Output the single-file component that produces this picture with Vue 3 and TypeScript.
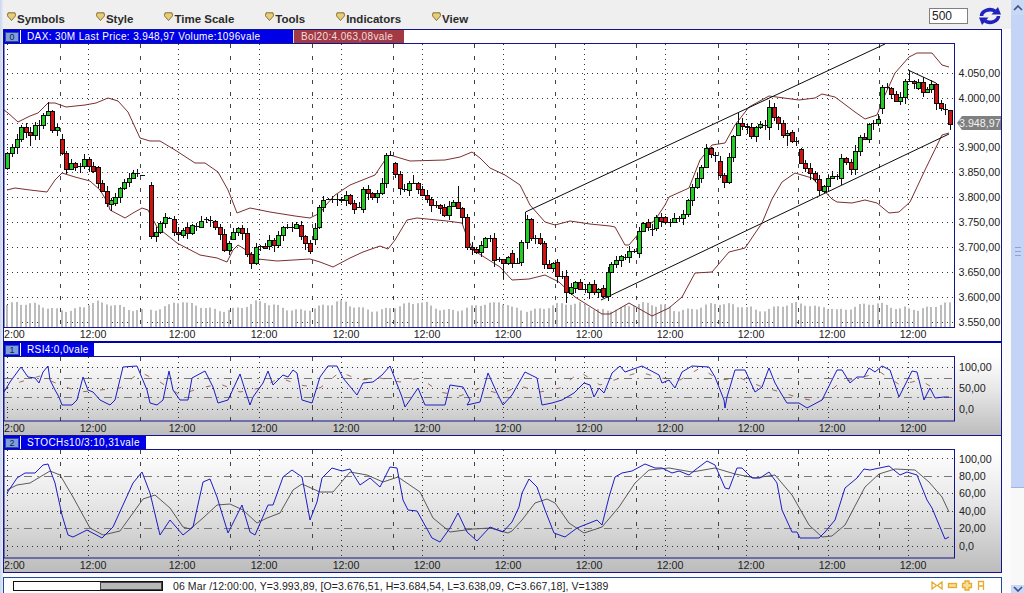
<script setup lang="ts">
type Candle = { x: number; top: number; bottom: number; kind: string; hi: number; lo: number; vol: number }

const menus = ['Symbols', 'Style', 'Time Scale', 'Tools', 'Indicators', 'View']

const raw = `7,153,168,g 12,147,153,g 17,139,147,g 21,127,139,g 26,127,132,r 30,132,135,r 35,125,135,g 39,125,125,d 43,115,125,g 48,111,115,g 52,111,130,r 57,127,130,g
62,139,153,r 66,153,169,r 71,163,169,g 75,163,167,r 80,166,166,d 84,159,166,g 89,159,166,r 93,166,171,r 98,167,183,r 102,183,191,r 107,191,203,r 111,200,204,g 115,197,203,g 120,188,197,g 124,182,188,g 129,178,182,g 133,173,178,g 137,173,173,d 142,175,175,d
151,185,236,r 156,232,236,g 160,223,232,g 165,217,223,g 169,218,218,d 174,219,232,r 178,232,234,r 183,230,235,g 187,227,233,r 192,225,233,g 196,226,226,d 201,221,227,g 206,219,219,d 210,220,220,d 215,221,227,r 220,227,234,r 224,234,250,r 229,243,250,g
233,232,239,g 238,228,232,g 242,228,233,r 247,233,254,r 251,254,263,r 256,247,263,g 260,246,246,d 265,246,248,r 269,240,246,g 274,240,245,r 278,235,245,g 283,227,235,g 287,227,227,d 292,227,227,d 296,224,228,g 301,225,236,r 305,236,243,r 310,243,251,r
315,228,239,g 319,207,227,g 323,200,207,g 328,199,199,d 332,199,199,d 337,199,199,d 341,199,200,g 346,195,200,g 350,195,203,r 354,203,209,r 359,207,207,d 363,189,209,g 368,189,193,r 372,193,197,r 377,193,197,g 382,183,193,g 386,155,183,g 390,155,155,d
395,163,174,r 400,174,188,r 404,189,189,d 409,183,190,g 413,183,183,d 418,183,189,r 422,189,195,r 427,195,199,r 431,199,205,r 436,205,205,d 440,205,208,r 444,207,215,r 449,206,215,g 453,202,206,g 458,202,208,r 462,208,217,r 467,217,247,r 472,247,249,r
476,249,252,r 481,245,252,g 485,238,247,g 490,238,238,d 494,238,260,r 499,259,259,d 503,259,263,r 508,257,263,g 512,253,263,r 517,263,263,d 521,242,262,g 527,219,242,g 531,219,238,r 535,238,238,d 540,238,243,r 544,243,264,r 549,264,268,r 553,263,268,g
557,262,276,r 562,276,276,d 566,276,292,r 571,287,293,g 575,282,288,g 580,282,289,r 585,289,289,d 589,284,292,g 594,284,292,r 598,289,292,g 603,288,296,r 608,272,296,g 611,264,272,g 616,260,264,g 621,256,260,g 625,257,257,d 629,251,257,g 634,251,251,d
639,231,253,g 643,223,231,g 648,222,227,r 652,229,229,d 656,217,228,g 661,217,221,r 665,217,222,r 670,222,222,d 674,218,222,g 679,218,218,d 683,214,218,g 688,200,214,g 692,187,200,g 697,178,187,g 701,167,178,g 706,148,167,g 711,148,154,r 715,155,155,d
720,161,175,r 724,175,182,r 729,157,182,g 733,136,157,g 738,123,135,g 742,123,126,r 747,126,127,r 751,127,136,r 756,127,136,g 760,124,127,g 765,125,125,d 769,107,127,g 774,107,117,r 778,117,123,r 783,123,135,r 787,133,135,g 792,132,141,r 796,141,141,d
801,149,163,r 805,163,168,r 810,168,173,r 815,173,179,r 819,179,190,r 824,186,191,g 828,178,186,g 832,176,178,g 837,176,176,d 841,158,178,g 846,158,162,r 851,162,169,r 855,151,169,g 860,137,151,g 864,137,139,r 869,124,139,g 873,123,123,d 878,119,123,g
882,87,108,g 887,87,87,d 891,88,94,r 896,94,101,r 900,97,101,g 905,81,97,g 909,81,81,d 914,81,83,r 918,82,88,g 923,82,92,r 927,89,92,g 931,84,89,g 936,84,103,r 941,103,108,r 945,109,109,d 950,110,124,r`

const wickFix: Record<number, [number, number]> = {
  769: [100, 140], 909: [70, 82], 738: [113, 136], 587: [285, 303], 566: [270, 303], 844: [150, 180], 855: [145, 175],
  48: [102, 116], 39: [120, 140], 30: [127, 146], 133: [170, 178], 142: [175, 175], 458: [186, 208], 413: [175, 184],
  850: [160, 178], 950: [110, 130], 324: [196, 208], 459: [186, 209], 787: [130, 146], 814: [171, 197], 503: [259, 279]
}

const candles: Candle[] = raw.trim().split(/\s+/).map((entry, i) => {
  const [x, top, bottom, kind] = entry.split(',')
  const nx = Number(x)
  const fix = wickFix[nx]
  const vol = 20 + 3.5 * Math.sin(i * 0.37) + 1.5 * Math.sin(i * 1.31) + (i % 18 < 3 ? 2 : 0)
  return {
    x: nx,
    top: Number(top),
    bottom: Number(bottom),
    kind,
    hi: fix ? fix[0] : Number(top) - ((i * 7) % 5) - 1,
    lo: fix ? fix[1] : Number(bottom) + ((i * 3) % 7) + 1,
    vol
  }
})

const bodyClass = (kind: string) => (kind === 'g' ? 'up' : 'down')

const upper = '4,110 8,113 18,122 30,116 38,113 48,103 55,103 66,107 85,105 96,103 108,98 118,101 128,112 140,138 150,141 160,141 175,150 195,163 205,163 218,172 228,190 232,200 237,213 250,208 270,212 295,216 310,218 320,213 326,205 335,195 350,185 375,175 385,160 390,155 400,158 410,161 445,160 460,157 472,152 480,158 490,168 505,175 520,185 530,205 545,222 555,225 570,221 590,224 610,226 615,227 625,245 629,245 640,232 655,220 665,205 669,197 689,188 700,160 712,145 725,143 735,125 749,107 769,96 799,100 815,98 822,94 835,97 855,112 865,119 877,115 884,97 895,73 909,57 917,53 932,53 942,65 949,67'
const lower = '7,190 15,188 30,190 47,192 55,180 62,173 75,177 90,181 100,190 108,203 110,210 125,218 133,213 142,208 148,210 157,227 177,243 200,255 217,258 227,262 233,250 238,245 246,250 258,259 277,261 310,259 320,262 333,267 350,258 363,252 380,246 388,249 395,240 407,220 417,218 447,221 462,223 467,237 473,250 500,267 512,280 529,279 545,275 559,282 575,297 602,314 610,314 629,303 652,316 669,308 682,297 695,273 712,272 729,252 745,248 762,223 772,199 782,182 795,173 812,178 832,199 837,202 852,203 865,200 877,203 889,213 899,212 910,202 925,170 942,135 949,133'
const rsi = '4,392 10,382 21,367 28,377 35,378 39,383 43,372 48,366 50,380 55,390 59,397 62,405 72,405 77,400 83,377 88,390 93,392 100,400 110,405 115,400 123,367 137,366 147,390 150,403 157,405 163,400 169,371 173,390 180,400 188,400 192,378 205,371 213,387 218,403 228,400 240,374 245,390 250,405 253,397 263,383 268,371 273,385 283,375 288,377 293,370 297,373 302,400 312,403 320,377 328,366 337,366 343,378 357,395 363,383 373,382 382,375 390,366 402,397 405,407 410,400 418,388 425,405 445,405 450,385 463,387 470,400 467,405 480,402 488,373 497,393 503,405 512,395 525,372 537,378 542,405 552,403 562,400 574,393 584,383 590,385 594,397 599,388 604,393 612,373 620,366 625,372 642,366 659,375 662,383 669,380 675,388 682,372 692,366 709,367 715,377 724,400 725,408 727,397 735,370 745,370 755,392 762,387 769,368 775,383 785,400 787,403 799,403 807,408 822,400 837,370 842,370 850,383 857,377 864,377 869,368 875,372 882,366 890,370 899,397 912,371 917,372 924,400 930,388 935,398 944,397 949,397'
const rsiSignal = '4,390 20,382 40,376 60,385 80,392 100,390 120,388 140,372 160,382 180,395 200,388 220,384 240,392 260,388 280,378 300,385 320,388 340,372 360,380 380,378 400,382 420,378 440,392 460,396 480,388 500,394 520,386 540,392 560,388 580,372 600,385 620,378 640,372 660,378 680,380 700,368 720,380 740,378 760,386 780,392 800,398 820,402 840,382 860,378 880,372 900,385 920,380 940,392'
const stoch = '7,493 17,478 25,473 35,473 43,465 48,464 55,483 62,515 68,535 73,537 87,530 102,538 113,527 133,483 142,472 150,493 160,535 170,520 183,535 193,527 203,482 210,479 217,497 228,533 242,505 250,532 255,535 268,505 273,505 283,477 292,470 302,477 310,520 317,502 322,478 332,468 342,471 350,469 360,485 370,478 380,487 390,467 397,468 403,500 408,510 417,511 432,538 440,542 450,528 458,513 467,532 477,541 490,527 503,532 512,522 519,507 522,493 529,479 537,487 545,510 554,533 565,537 577,528 597,520 602,525 609,497 615,477 622,473 632,471 645,464 655,468 662,468 672,473 679,471 689,475 695,470 707,461 715,465 725,488 729,489 737,468 742,468 752,478 760,478 769,472 777,483 782,510 792,532 797,532 800,538 819,538 825,532 835,520 845,488 857,478 864,469 870,470 889,466 900,475 907,472 917,475 927,500 932,508 945,539 949,537'
const stochSignal = '7,490 17,485 30,483 40,477 50,471 60,475 73,497 90,528 103,535 120,531 133,513 143,499 155,495 170,508 183,527 190,529 203,518 217,505 230,504 243,510 257,523 267,518 280,513 293,490 302,484 320,492 333,492 350,472 367,475 383,482 398,477 420,492 433,518 450,532 473,529 490,528 508,533 512,531 522,520 535,503 547,499 555,503 569,523 584,533 602,527 619,507 635,483 649,470 669,468 692,472 715,468 735,474 755,478 775,475 792,495 809,525 822,537 832,536 845,525 865,487 879,474 895,469 915,470 929,482 942,497 949,512'

const mainDotted = [73, 98, 123, 147, 172, 197, 222, 247, 272, 297, 322]
const dayDotted = [7, 88, 178, 259, 341, 422, 503, 584, 665, 746, 828, 908]
const dayDashed = [60, 140, 230, 312, 393, 474, 555, 636, 718, 798, 879]
const timeLabels = [93, 182, 264, 346, 427, 508, 589, 670, 751, 832, 913]

const priceLabels = [
  ['4.050,00', 73], ['4.000,00', 98], ['3.900,00', 147], ['3.850,00', 172], ['3.800,00', 197],
  ['3.750,00', 222], ['3.700,00', 247], ['3.650,00', 272], ['3.600,00', 297], ['3.550,00', 322]
] as const
const rsiLabels = [['100,00', 367], ['50,00', 388], ['0,0', 409]] as const
const stochLabels = [['100,00', 459], ['80,00', 476], ['60,00', 493], ['40,00', 511], ['20,00', 528], ['0,0', 546]] as const
</script>

<template>
  <div class="page">
    <div class="left-edge"></div>
    <div class="main">
      <header class="toolbar">
        <nav class="menus">
          <span v-for="m in menus" :key="m" class="menu">
            <svg width="9" height="9" viewBox="0 0 9 9" class="gem"><path d="M1 .8h7l.6 3L4.500 8.500.4 3.800z" fill="#e6cd7c" stroke="#7d6420" stroke-width=".9" /></svg>
            {{ m }}
          </span>
        </nav>
        <div class="tools">
          <div class="count">500</div>
          <svg width="24" height="20" viewBox="0 0 24 20" class="refresh">
            <path d="M3.500 10A8.500 6.500 0 0 1 17 5" fill="none" stroke="#2222c0" stroke-width="3.600" />
            <path d="M13.500 8.500H23L20 1z" fill="#2222c0" />
            <path d="M20.500 10A8.500 6.500 0 0 1 7 15" fill="none" stroke="#2222c0" stroke-width="3.600" />
            <path d="M10.500 11.500H1L4 19z" fill="#2222c0" />
          </svg>
        </div>
      </header>

      <section class="panels">
        <div class="tabs">
          <span class="tab blue"><i class="chip">0</i><b class="tab-text wide">DAX: 30M Last Price: 3.948,97 Volume:1096vale</b></span>
          <span class="tab red">Bol20:4.063,08vale</span>
        </div>
        <svg class="chart" width="997" height="298" viewBox="4 43 997 298">
          <g class="dots">
            <line v-for="y in mainDotted" :key="y" x1="7" x2="955" :y1="y + 0.5" :y2="y + 0.5" />
            <line v-for="x in dayDotted" :key="x" :x1="x + 0.5" :x2="x + 0.5" y1="44" y2="327" />
          </g>
          <g class="dashes"><line v-for="x in dayDashed" :key="x" :x1="x + 0.5" :x2="x + 0.5" y1="44" y2="327" /></g>
          <rect v-for="c in candles" :key="'v' + c.x" class="vol" :x="c.x - 1" :y="327 - c.vol" width="2" :height="c.vol" />
          <polyline class="band" :points="upper" />
          <polyline class="band" :points="lower" />
          <path class="ink" d="M525.500 219V212L885 44M601 300L949 134M908 70L936 83" />
          <g v-for="c in candles" :key="c.x">
            <line class="wick" :x1="c.x + 0.5" :x2="c.x + 0.5" :y1="c.hi" :y2="c.lo" />
            <line v-if="c.kind === 'd'" class="wick" :x1="c.x - 2" :x2="c.x + 3" :y1="c.top + 0.5" :y2="c.top + 0.5" />
            <rect v-else :class="bodyClass(c.kind)" :x="c.x - 1.5" :y="c.top + 0.5" width="4" :height="c.bottom - c.top" />
          </g>
          <rect class="frame" x="4" y="43.500" width="950.500" height="284" />
          <text v-for="l in priceLabels" :key="l[0]" class="num" x="958.500" :y="l[1] + 4">{{ l[0] }}</text>
          <path class="tag" d="M957 123l5-7h39v14h-39z" />
          <text class="num tag-text" x="959" y="127">3.948,97</text>
          <text class="num" x="4" y="338">2:00</text>
          <text v-for="x in timeLabels" :key="x" class="num mid" :x="x" y="338">12:00</text>
        </svg>
        <div class="rule thick"></div>

        <div class="tabs"><span class="tab blue"><i class="chip">1</i><b class="tab-text rsi">RSI4:0,0vale</b></span></div>
        <svg class="chart shaded" width="997" height="79" viewBox="4 356 997 79">
          <g class="dots">
            <line v-for="y in [367, 388, 409]" :key="y" x1="7" x2="955" :y1="y + 0.5" :y2="y + 0.5" />
            <line v-for="x in dayDotted" :key="x" :x1="x + 0.5" :x2="x + 0.5" y1="357" y2="421" />
          </g>
          <g class="dashes"><line v-for="x in dayDashed" :key="x" :x1="x + 0.5" :x2="x + 0.5" y1="357" y2="421" /></g>
          <g class="level"><line x1="4" x2="955" y1="378.500" y2="378.500" /><line x1="4" x2="955" y1="397.500" y2="397.500" /></g>
          <polyline class="signal" :points="rsiSignal" />
          <polyline class="line-blue" :points="rsi" />
          <rect class="frame" x="4" y="356.500" width="950.500" height="64.500" />
          <text v-for="l in rsiLabels" :key="l[0]" class="num" x="959" :y="l[1] + 4">{{ l[0] }}</text>
          <text class="num" x="4" y="432">2:00</text>
          <text v-for="x in timeLabels" :key="x" class="num mid" :x="x" y="432">12:00</text>
        </svg>
        <div class="rule"></div>

        <div class="tabs"><span class="tab blue"><i class="chip">2</i><b class="tab-text">STOCHs10/3:10,31vale</b></span></div>
        <svg class="chart shaded" width="997" height="123" viewBox="4 449 997 123">
          <g class="dots">
            <line v-for="y in [458, 493, 511, 546]" :key="y" x1="7" x2="955" :y1="y + 0.5" :y2="y + 0.5" />
            <line v-for="x in dayDotted" :key="x" :x1="x + 0.5" :x2="x + 0.5" y1="450" y2="558" />
          </g>
          <g class="dashes"><line v-for="x in dayDashed" :key="x" :x1="x + 0.5" :x2="x + 0.5" y1="450" y2="558" /></g>
          <g class="level"><line x1="4" x2="955" y1="476.500" y2="476.500" /><line x1="4" x2="955" y1="528.500" y2="528.500" /></g>
          <polyline class="line-gray" :points="stochSignal" />
          <polyline class="line-blue" :points="stoch" />
          <rect class="frame" x="4" y="449.500" width="950.500" height="108.500" />
          <text v-for="l in stochLabels" :key="l[0]" class="num" x="959" :y="l[1] + 4">{{ l[0] }}</text>
          <text class="num" x="4" y="569">2:00</text>
          <text v-for="x in timeLabels" :key="x" class="num mid" :x="x" y="569">12:00</text>
        </svg>
      </section>

      <footer class="status">
        <div class="slider"><div class="slider-thumb"></div></div>
        <span class="status-text">06 Mar /12:00:00, Y=3.993,89, [O=3.676,51, H=3.684,54, L=3.638,09, C=3.667,18], V=1389</span>
        <svg class="status-icons" width="56" height="11" viewBox="0 0 56 11">
          <g fill="none" stroke="#e8a92c" stroke-width="1.300">
            <path d="M1 2l4.500 3.500L1 9zM11 2L6.500 5.500 11 9z" />
            <rect x="17.500" y="3.500" width="8" height="4" fill="#f7df9a" />
            <path d="M34 3V1h4v2.500h2.500v4H38V10h-4V7.500h-2.500v-4z" fill="#f7df9a" />
            <path d="M47.500 10V1.500h5V10M47.500 6h5" />
          </g>
        </svg>
      </footer>
    </div>
    <aside class="scrollbar">
      <div class="sb-btn"><svg width="10" height="6" viewBox="0 0 10 6"><path d="M1 5l4-4 4 4" fill="none" stroke="#3a4f8f" stroke-width="1.600" /></svg></div>
      <div class="sb-thumb"><span class="grip"></span></div>
      <div class="sb-track"></div>
      <div class="sb-btn bottom"><svg width="10" height="6" viewBox="0 0 10 6"><path d="M1 1l4 4 4-4" fill="none" stroke="#3a4f8f" stroke-width="1.600" /></svg></div>
    </aside>
  </div>
</template>

<style scoped>
.page {
  width: 1024px;
  height: 593px;
  display: flex;
  overflow: hidden;
  background: #fbfbfb;
  font-family: "Liberation Sans", Arial, sans-serif;
}
.left-edge {
  width: 3px;
  flex: none;
  background: linear-gradient(90deg, #c9d6f2, #e6ebf5);
}
.main {
  width: 999px;
  flex: none;
  display: flex;
  flex-direction: column;
}
.toolbar {
  height: 29px;
  flex: none;
  margin-right: -9px;
  background: #efefef;
  display: flex;
  align-items: center;
  justify-content: space-between;
  padding: 0 9px 0 4px;
  box-sizing: border-box;
}
.menus {
  display: flex;
  gap: 31px;
  margin-top: 8px;
}
.menu {
  display: flex;
  align-items: center;
  gap: 0;
  font-size: 11.500px;
  font-weight: 700;
  color: #2b2b2b;
}
.gem {
  margin-right: 1px;
  margin-top: -4px;
}
.tools {
  display: flex;
  align-items: center;
  gap: 10px;
  margin-top: 3px;
}
.count {
  width: 39px;
  height: 16px;
  box-sizing: border-box;
  border: 1px solid #808080;
  background: #fff;
  font-size: 12px;
  line-height: 15px;
  padding-left: 2px;
  color: #222;
}
.panels {
  border: 1px solid #14148c;
  background: #fff;
  flex: none;
}
.tabs {
  height: 13px;
  display: flex;
  background: #fff;
  overflow: hidden;
}
.tab {
  height: 13px;
  display: flex;
  align-items: center;
  font-size: 10px;
  letter-spacing: 0.37px;
  color: #fff;
  box-sizing: border-box;
}
.blue {
  background: #0000e6;
  padding-left: 1px;
}
.wide {
  width: 260px;
}
.rsi {
  width: 61px;
}
.tab-text {
  font-weight: 400;
  padding: 0 6px;
  border-left: 1px solid #fff;
  margin-left: 1px;
  line-height: 13px;
  white-space: nowrap;
}
.chip {
  width: 14px;
  height: 10px;
  box-sizing: border-box;
  background: #7f9fdc;
  border: 1px solid #2c46a8;
  color: #14204a;
  font-style: normal;
  font-size: 9px;
  line-height: 8px;
  text-align: center;
  letter-spacing: 0;
}
.red {
  background: #a23a44;
  color: #f3dfdf;
  width: 111px;
  padding-left: 7px;
  border-left: 1px solid #d9d9ee;
}
.chart {
  display: block;
}
.shaded {
  background: linear-gradient(180deg, #ffffff 0%, #e6e6e6 45%, #bcbcbc 100%);
}
.rule {
  height: 1px;
  background: #14148c;
}
.thick {
  height: 2px;
  background: #0000b0;
}
.dots line {
  stroke: #333;
  stroke-width: 1;
  stroke-dasharray: 1 4;
}
.dashes line {
  stroke: #444;
  stroke-width: 1;
  stroke-dasharray: 4 8;
}
.level line {
  stroke: #777;
  stroke-width: 1;
  stroke-dasharray: 8 5 2 5;
}
.vol {
  fill: #bcbcbc;
}
.band {
  fill: none;
  stroke: #7a3030;
  stroke-width: 1;
}
.ink {
  fill: none;
  stroke: #0c0c0c;
  stroke-width: 1;
}
.wick {
  stroke: #101010;
  stroke-width: 1;
}
.up {
  fill: #22cc22;
  stroke: #0a0a0a;
  stroke-width: 1;
}
.down {
  fill: #cf1212;
  stroke: #0a0a0a;
  stroke-width: 1;
}
.frame {
  fill: none;
  stroke: #14148c;
  stroke-width: 1;
}
.num {
  font-size: 10.700px;
  fill: #222;
  font-family: "Liberation Sans", Arial, sans-serif;
}
.mid {
  text-anchor: middle;
}
.tag {
  fill: #808080;
}
.tag-text {
  fill: #f2f2f2;
}
.signal {
  fill: none;
  stroke: #8a4a3a;
  stroke-width: 0.800;
  stroke-dasharray: 5 12;
}
.line-blue {
  fill: none;
  stroke: #1c1cc4;
  stroke-width: 1;
}
.line-gray {
  fill: none;
  stroke: #4a4a4a;
  stroke-width: 0.900;
}
.status {
  margin-top: 4px;
  height: 16px;
  box-sizing: border-box;
  flex: none;
  border: 1px solid #1f4aa0;
  border-bottom: 0;
  background: #fff;
  display: flex;
  align-items: center;
  padding-left: 9px;
}
.slider {
  width: 150px;
  height: 10px;
  box-sizing: border-box;
  border: 1px solid #111;
  background: #fff;
  display: flex;
  justify-content: flex-end;
}
.slider-thumb {
  width: 62px;
  background: #b8b8b8;
  border: 1px solid #444;
  box-sizing: border-box;
}
.status-text {
  margin-left: 10px;
  font-size: 10.500px;
  letter-spacing: 0.090px;
  color: #222;
}
.status-icons {
  margin-left: auto;
  margin-right: 14px;
}
.scrollbar {
  width: 13px;
  margin-left: 9px;
  flex: none;
  display: flex;
  flex-direction: column;
}
.sb-btn {
  height: 15px;
  flex: none;
  background: #c9d8f4;
  display: flex;
  align-items: center;
  justify-content: center;
}
.bottom {
  height: 8px;
  overflow: hidden;
}
.sb-thumb {
  height: 472px;
  flex: none;
  background: #c4d4f6;
  border-bottom: 1px solid #9fb4e0;
  display: flex;
  align-items: center;
  justify-content: center;
}
.grip {
  width: 6px;
  height: 7px;
  border-top: 1px solid #8ea3d2;
  border-bottom: 1px solid #8ea3d2;
  background: linear-gradient(180deg, transparent 40%, #8ea3d2 40%, #8ea3d2 60%, transparent 60%);
}
.sb-track {
  flex: 1;
  background: #f8f8f8;
}
</style>
